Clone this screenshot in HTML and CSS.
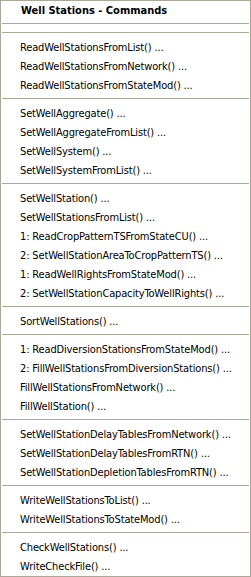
FILE: index.html
```html
<!DOCTYPE html>
<html lang="en">
<head>
  <meta charset="UTF-8" />
  <title>Well Stations - Commands</title>
  <link rel="stylesheet" href="styles.css">
</head>
<body>

<div class="menu">
  <div class="menu-title">Well Stations - Commands</div>
  <div class="sep"></div>
  <div class="sep"></div>

  <div class="item">ReadWellStationsFromList() ...</div>
  <div class="item">ReadWellStationsFromNetwork() ...</div>
  <div class="item">ReadWellStationsFromStateMod() ...</div>
  <div class="sep"></div>

  <div class="item">SetWellAggregate() ...</div>
  <div class="item">SetWellAggregateFromList() ...</div>
  <div class="item">SetWellSystem() ...</div>
  <div class="item">SetWellSystemFromList() ...</div>
  <div class="sep"></div>

  <div class="item">SetWellStation() ...</div>
  <div class="item">SetWellStationsFromList() ...</div>
  <div class="item">1: ReadCropPatternTSFromStateCU() ...</div>
  <div class="item">2: SetWellStationAreaToCropPatternTS() ...</div>
  <div class="item">1: ReadWellRightsFromStateMod() ...</div>
  <div class="item">2: SetWellStationCapacityToWellRights() ...</div>
  <div class="sep"></div>

  <div class="item">SortWellStations() ...</div>
  <div class="sep"></div>

  <div class="item">1: ReadDiversionStationsFromStateMod() ...</div>
  <div class="item">2: FillWellStationsFromDiversionStations() ...</div>
  <div class="item">FillWellStationsFromNetwork() ...</div>
  <div class="item">FillWellStation() ...</div>
  <div class="sep"></div>

  <div class="item">SetWellStationDelayTablesFromNetwork() ...</div>
  <div class="item">SetWellStationDelayTablesFromRTN() ...</div>
  <div class="item">SetWellStationDepletionTablesFromRTN() ...</div>
  <div class="sep"></div>

  <div class="item">WriteWellStationsToList() ...</div>
  <div class="item">WriteWellStationsToStateMod() ...</div>
  <div class="sep"></div>

  <div class="item">CheckWellStations() ...</div>
  <div class="item">WriteCheckFile() ...</div>
</div>

</body>
</html>
```

FILE: styles.css
```css
body {
  margin: 0;
  padding: 0;
  background-color: #ffffff;
  font-family: 'DejaVu Sans Condensed', 'DejaVu Sans', sans-serif;
  font-size: 11px;
  color: #000;
}

.menu {
  width: 251px;
  height: 577px;
  box-sizing: border-box;
  border: 1px solid #aca899;
  background: white;
  overflow: hidden;
}

.menu-title {
  height: 19px;
  line-height: 19px;
  padding-left: 20px;
  font-weight: bold;
  white-space: nowrap;
}

.item {
  height: 19px;
  line-height: 19px;
  padding-left: 19px;
  letter-spacing: -0.15px;
  white-space: nowrap;
}

.sep {
  height: 9px;
  padding-top: 3px;
  box-sizing: border-box;
}

.sep::before {
  content: "";
  display: block;
  height: 1px;
  margin: 0 1px;
  background-color: #aca899;
}
```
